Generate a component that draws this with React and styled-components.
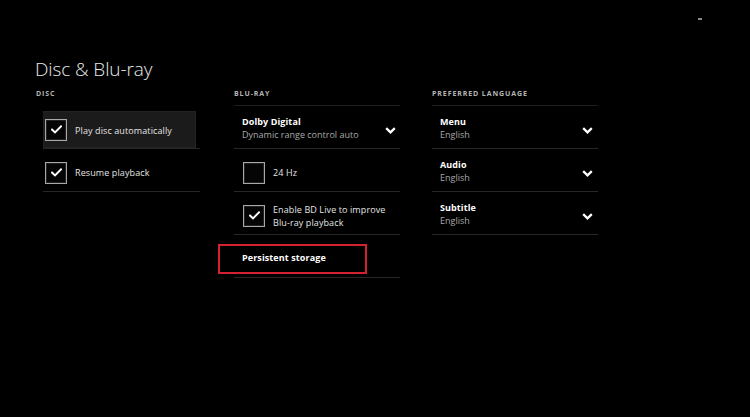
import React from "react";
import styled, { createGlobalStyle } from "styled-components";

const Global = createGlobalStyle`
  html, body { margin: 0; padding: 0; background: #000; }
  body { font-family: "Open Sans", "Noto Sans", sans-serif; -webkit-font-smoothing: antialiased; }
`;

const Page = styled.div`
  width: 750px;
  height: 417px;
  background: #000;
  color: #fff;
  overflow: hidden;
  display: flex;
  flex-direction: column;
`;

const TopBar = styled.div`
  height: 56px;
  display: flex;
  justify-content: flex-end;
  padding: 18px 48px 0 0;
  box-sizing: border-box;
`;

const Dash = styled.span`
  width: 4px;
  height: 2px;
  background: #8a8a8a;
`;

const Title = styled.h1`
  margin: 0 0 0 35px;
  font-weight: 300;
  font-size: 19px;
  line-height: 26px;
  color: #e8e8e8;
  letter-spacing: -0.1px;
`;

const Columns = styled.div`
  display: grid;
  grid-template-columns: 198px 198px 166px;
  padding-left: 36px;
  margin-top: 7px;
`;

const Column = styled.section`
  display: flex;
  flex-direction: column;
`;

const Label = styled.div`
  font-size: 7px;
  font-weight: 700;
  letter-spacing: 0.9px;
  text-transform: uppercase;
  color: #b5b5b5;
  line-height: 10px;
  height: 16px;
`;

const List = styled.div`
  width: ${(p) => p.$width}px;
  margin-left: ${(p) => p.$offset || 0}px;
  border-top: 1px solid ${(p) => (p.$noTop ? "transparent" : "#1c1c1c")};
`;

const Row = styled.div`
  position: relative;
  height: 39px;
  border-bottom: 1px solid #262626;
  display: flex;
  align-items: center;
  padding: 3px ${(p) => p.$right || 6}px 0 ${(p) => p.$left || 8}px;
`;

const Tile = styled.div`
  height: 42px;
  border-bottom: 1px solid #262626;
  display: flex;
  flex-direction: column;
  justify-content: flex-end;
`;

const TileInner = styled.div`
  height: 37px;
  margin-right: 4px;
  padding-left: 2px;
  display: flex;
  align-items: center;
  gap: 8px;
  background: ${(p) => (p.$focused ? "#1b1b1b" : "transparent")};
  box-shadow: ${(p) => (p.$focused ? "inset 0 0 0 1px #222" : "none")};
`;

const BoxWrap = styled.div`
  width: 20px;
  height: 20px;
  flex: none;
  border: 1.5px solid #a8a8a8;
  box-shadow: inset 0 0 0 1px #222;
  background: #050505;
  display: flex;
  align-items: center;
  justify-content: center;
`;

const CheckRow = styled.div`
  display: flex;
  align-items: center;
  gap: 8px;
  margin-top: 2px;
`;

const Text = styled.div`
  font-size: 9px;
  line-height: 13px;
  color: ${(p) => (p.$bold ? "#ffffff" : "#e4e4e4")};
  font-weight: ${(p) => (p.$bold ? 700 : 400)};
  letter-spacing: 0.1px;
  margin-top: ${(p) => p.$shift || 0}px;
`;

const Sub = styled.div`
  font-size: 9px;
  line-height: 13px;
  color: #a8a8a8;
`;

const Stack = styled.div`
  flex: 1;
  display: flex;
  flex-direction: column;
  margin-top: -1px;
`;

const ChevronWrap = styled.div`
  flex: none;
  margin-top: 3px;
  display: flex;
`;

const Highlight = styled.div`
  position: absolute;
  left: -16px;
  top: 9px;
  width: 145px;
  height: 26px;
  border: 2px solid #d3212f;
`;

function Check({ checked }) {
  return (
    <BoxWrap>
      {checked && (
        <svg width="11" height="9" viewBox="0 0 11 9">
          <polyline points="1,4.6 4,7.4 10,1.4" fill="none" stroke="#fff" strokeWidth="2" strokeLinecap="square" />
        </svg>
      )}
    </BoxWrap>
  );
}

function Chevron() {
  return (
    <ChevronWrap>
      <svg width="11" height="7" viewBox="0 0 11 7">
        <polyline points="1.2,1.2 5.5,5.3 9.8,1.2" fill="none" stroke="#fff" strokeWidth="2.3" />
      </svg>
    </ChevronWrap>
  );
}

function Select({ title, value, right }) {
  return (
    <Row $left={8} $right={right}>
      <Stack>
        <Text $bold>{title}</Text>
        <Sub>{value}</Sub>
      </Stack>
      <Chevron />
    </Row>
  );
}

export default function App() {
  return (
    <Page>
      <Global />
      <TopBar>
        <Dash />
      </TopBar>
      <Title>Disc &amp; Blu-ray</Title>
      <Columns>
        <Column>
          <Label>Disc</Label>
          <List $width={157} $offset={7} $noTop>
            <Tile>
              <TileInner $focused>
                <Check checked />
                <Text $shift={2}>Play disc automatically</Text>
              </TileInner>
            </Tile>
            <Tile>
              <TileInner>
                <Check checked />
                <Text>Resume playback</Text>
              </TileInner>
            </Tile>
          </List>
        </Column>
        <Column>
          <Label>Blu-ray</Label>
          <List $width={166}>
            <Select title="Dolby Digital" value="Dynamic range control auto" right={4} />
            <Row $left={9}>
              <CheckRow>
                <Check />
                <Text>24 Hz</Text>
              </CheckRow>
            </Row>
            <Row $left={9}>
              <CheckRow>
                <Check checked />
                <Text>
                  Enable BD Live to improve
                  <br />
                  Blu-ray playback
                </Text>
              </CheckRow>
            </Row>
            <Row $left={8}>
              <Text $bold>Persistent storage</Text>
              <Highlight />
            </Row>
          </List>
        </Column>
        <Column>
          <Label>Preferred language</Label>
          <List $width={166}>
            <Select title="Menu" value="English" right={5} />
            <Select title="Audio" value="English" right={5} />
            <Select title="Subtitle" value="English" right={5} />
          </List>
        </Column>
      </Columns>
    </Page>
  );
}
